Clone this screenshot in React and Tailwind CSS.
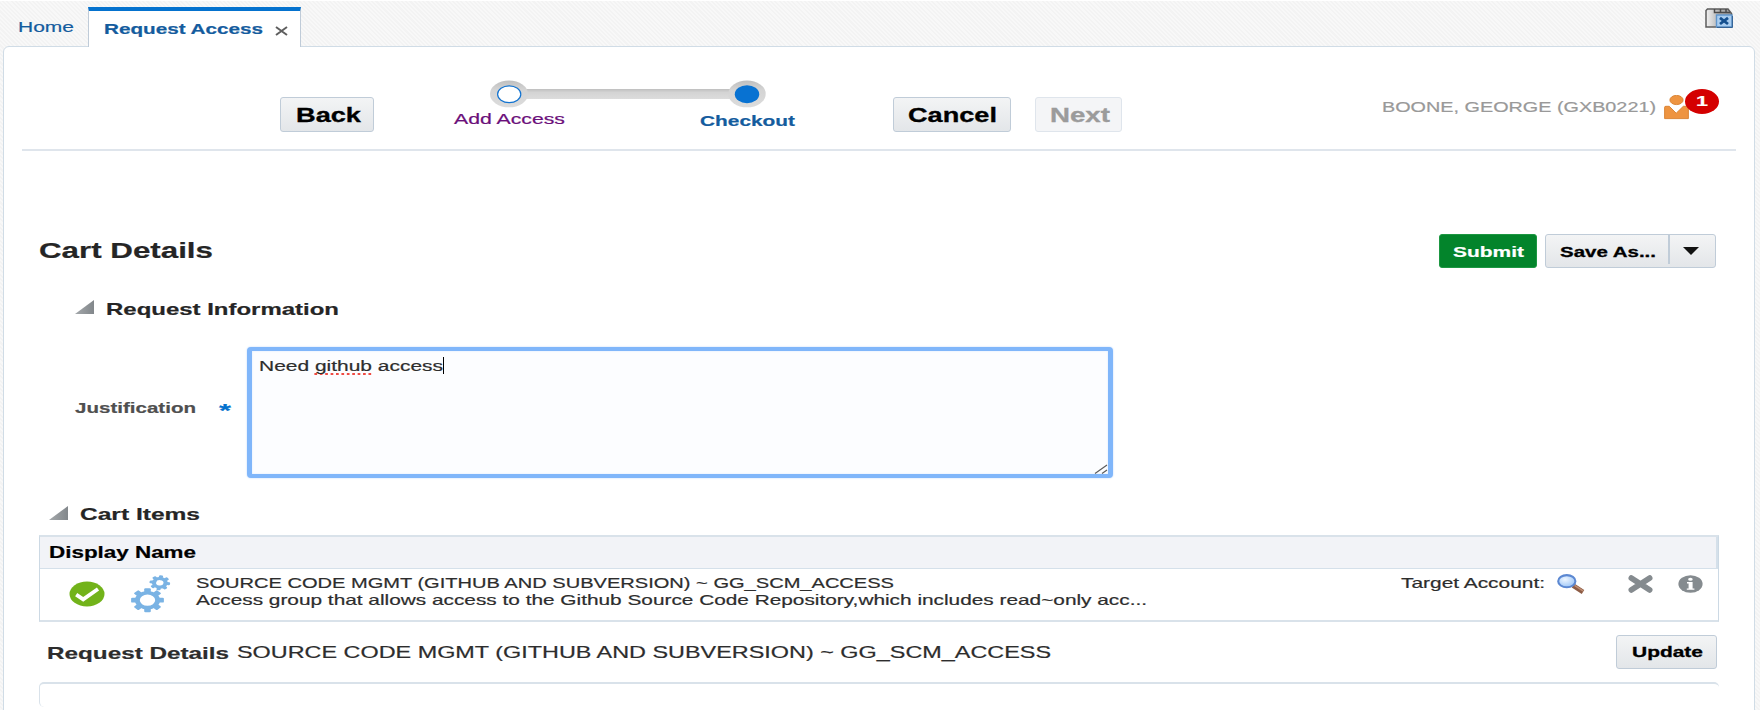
import React, { useLayoutEffect, useRef } from "react";

// Text set wide: the glyphs are stretched to fill the width of the box.
function Wide({ className = "", children }) {
  const box = useRef(null);
  const text = useRef(null);
  useLayoutEffect(() => {
    const el = text.current;
    el.style.transform = "none";
    const natural = el.getBoundingClientRect().width;
    const target = box.current.getBoundingClientRect().width;
    el.style.transform = `scaleX(${target / natural})`;
  });
  return (
    <span ref={box} className={`block shrink-0 whitespace-nowrap ${className}`}>
      <span ref={text} className="inline-block origin-left align-top">
        {children}
      </span>
    </span>
  );
}

function Triangle({ className }) {
  return (
    <svg className={`block shrink-0 ${className}`} viewBox="0 0 19 14" preserveAspectRatio="none">
      <defs>
        <linearGradient id="tri" x1="0" x2="1">
          <stop offset="0" stopColor="#a4a8ab" />
          <stop offset="1" stopColor="#82878b" />
        </linearGradient>
      </defs>
      <path d="M19 0V14H0z" fill="url(#tri)" />
    </svg>
  );
}

const button =
  "flex shrink-0 rounded-[3px] border border-[#c0ccd8] bg-linear-to-b from-[#f3f4f5] to-[#e3e6e9] text-black font-bold [-webkit-text-stroke:0.3px_black]";

function TabsIcon() {
  return (
    <svg className="mt-[7px] ml-auto mr-[27px] h-5 w-7" viewBox="0 0 28 20">
      <defs>
        <linearGradient id="folder" x1="0" x2="1">
          <stop offset="0" stopColor="#f2f2f2" />
          <stop offset="0.5" stopColor="#b4b4b4" />
          <stop offset="1" stopColor="#9a9a9a" />
        </linearGradient>
      </defs>
      <path d="M2.5 1H23l3.5 4.5V19H1V2.5z" fill="url(#folder)" stroke="#5c5c5c" strokeWidth="1.5" />
      <path d="M9.5 1v3.5H25M15.5 1v3M21 1v3" fill="none" stroke="#4a4a4a" strokeWidth="1.5" />
      <rect x="11.5" y="7" width="15.5" height="12" fill="#a9cdf0" stroke="#5e94cb" strokeWidth="1.4" />
      <path d="M12 19.4H27.4V8" fill="none" stroke="#2f5f92" strokeWidth="1" />
      <path d="M15 9.8l8 6.2M23 9.8l-8 6.2" stroke="#15508f" strokeWidth="2.8" />
    </svg>
  );
}

function Stepper() {
  return (
    <svg className="block h-[28px] w-[276px]" viewBox="0 0 276 28">
      <defs>
        <linearGradient id="track" x1="0" y1="0" x2="0" y2="1">
          <stop offset="0" stopColor="#bfbfbf" />
          <stop offset="0.35" stopColor="#d4d4d4" />
          <stop offset="1" stopColor="#dcdcdc" />
        </linearGradient>
      </defs>
      <rect x="34" y="9" width="208" height="10" fill="url(#track)" />
      <ellipse cx="19" cy="13.9" rx="19" ry="13.4" fill="url(#track)" />
      <ellipse cx="257" cy="13.9" rx="18.7" ry="13.4" fill="url(#track)" />
      <ellipse cx="19.2" cy="14.2" rx="11.6" ry="8.4" fill="#fff" stroke="#1273d0" strokeWidth="1.2" />
      <ellipse cx="257" cy="14.2" rx="12.2" ry="9" fill="#0872d2" />
    </svg>
  );
}

function PersonIcon() {
  return (
    <svg className="block h-[25px] w-[25px]" viewBox="0 0 25 25">
      <ellipse cx="12.5" cy="5" rx="6.6" ry="4.6" fill="#ee9440" stroke="#d87f2c" strokeWidth="0.9" />
      <path
        d="M.6 12.2Q.6 11.3 2 11.3H5.3L12.2 18.2 19.3 11.3H22.8Q24.4 11.3 24.4 12.4V23.6H.6z"
        fill="#ee9440"
        stroke="#d87f2c"
        strokeWidth="0.9"
      />
    </svg>
  );
}

function CheckIcon() {
  return (
    <svg className="block h-[26px] w-[36px] shrink-0" viewBox="0 0 36 26">
      <ellipse cx="18" cy="13" rx="17.5" ry="12.5" fill="#72b31a" />
      <path d="M7.2 13.6L14.2 18.4 29 8" fill="none" stroke="#fff" strokeWidth="3.8" />
    </svg>
  );
}

const teeth = [0, 45, 90, 135, 180, 225, 270, 315];

function Gear({ x, y, r, hole, tooth, turn }) {
  return (
    <g transform={`translate(${x} ${y}) scale(1.37 1) rotate(${turn})`} fill="#7ab3e4">
      <circle r={(r + hole) / 2} fill="none" stroke="#7ab3e4" strokeWidth={r - hole} />
      {teeth.map((a) => (
        <rect key={a} x={-tooth / 2} y={-r * 1.3} width={tooth} height={r * 0.5} rx="0.9" transform={`rotate(${a})`} />
      ))}
    </g>
  );
}

function GearsIcon() {
  return (
    <svg className="block h-[38px] w-[41px] shrink-0" viewBox="0 0 41 38">
      <Gear x={17.5} y={25.2} r={9.2} hole={5.6} tooth={4.8} turn={0} />
      <Gear x={29.8} y={7.8} r={5.8} hole={2.7} tooth={3} turn={8} />
    </svg>
  );
}

function SearchIcon() {
  return (
    <svg className="block h-5 w-7 shrink-0" viewBox="0 0 28 20">
      <defs>
        <radialGradient id="lens" cx="0.4" cy="0.35" r="0.7">
          <stop offset="0" stopColor="#eef6ff" />
          <stop offset="1" stopColor="#98c3f7" />
        </radialGradient>
      </defs>
      <path d="M16 11.5L26 18" stroke="#8d5c45" strokeWidth="4.6" />
      <path d="M17.5 11.4L26 16.9" stroke="#c08f74" strokeWidth="1.4" />
      <ellipse cx="9.8" cy="7.2" rx="8.6" ry="6.1" fill="url(#lens)" stroke="#5c88d2" strokeWidth="2.1" />
    </svg>
  );
}

function RemoveIcon() {
  return (
    <svg className="block h-[18px] w-[25px] shrink-0" viewBox="0 0 25 18">
      <path d="M3.4 3.1L21.6 14.9M21.6 3.1L3.4 14.9" stroke="#858b8f" strokeWidth="5.8" strokeLinecap="round" />
    </svg>
  );
}

function InfoIcon() {
  return (
    <svg className="block h-[18px] w-[25px] shrink-0" viewBox="0 0 25 18">
      <ellipse cx="12.5" cy="9" rx="12.1" ry="8.7" fill="#858b8f" />
      <ellipse cx="12.4" cy="4.3" rx="2.3" ry="1.5" fill="#fff" />
      <path d="M9 7H14.6V13.4H16.4V14.8H8.8V13.4H10.6V8.4H9z" fill="#fff" />
    </svg>
  );
}

export default function App() {
  return (
    <div className="h-[710px] w-[1760px] overflow-hidden border-t border-white bg-[#f6f6f6] bg-[repeating-linear-gradient(45deg,#f8f8f8_0px,#f8f8f8_1.5px,#f3f3f3_1.5px,#f3f3f3_3px)] font-['Liberation_Sans',Arial,sans-serif] text-[#2d2d2d] [-webkit-text-stroke:0.2px_currentColor]">
      <header className="flex h-[45px]">
        <Wide className="mt-[12px] ml-[18px] h-7 w-[56px] text-[15px] leading-7 text-[#145c9e]">Home</Wide>
        <div className="relative mt-[6px] ml-[14px] flex h-[40px] w-[213px] border-x border-t-4 border-x-[#bfcbd8] border-t-[#0572ce] bg-white">
          <Wide className="mt-[4px] ml-[15px] h-7 w-[159px] text-[15px] leading-7 font-bold text-[#145c9e]">
            Request Access
          </Wide>
          <svg className="mt-[15px] ml-[12px] h-[10px] w-[13px]" viewBox="0 0 13 10">
            <path d="M1 1l11 8M12 1L1 9" stroke="#5e5e5e" strokeWidth="2" />
          </svg>
        </div>
        <TabsIcon />
      </header>

      <main className="ml-[3px] h-[670px] w-[1752px] rounded-t-md border border-[#d0dce6] bg-white">
        <div className="mr-[18px] ml-[18px] flex h-[104px] border-b-2 border-[#dfe5ec]">
          <div className={`${button} mt-[50px] ml-[258px] h-[35px] w-[94px]`}>
            <Wide className="mt-px ml-[15px] h-8 w-[65px] text-[19.5px] leading-8">Back</Wide>
          </div>
          <div className="mt-[33px] ml-[79px] w-[360px]">
            <div className="ml-[37px]">
              <Stepper />
            </div>
            <div className="flex">
              <Wide className="mt-[1px] ml-[1px] h-5 w-[111px] text-[15.5px] leading-5 text-[#6b0f7a]">Add Access</Wide>
              <Wide className="mt-[3px] ml-[135px] h-5 w-[95px] text-[15px] leading-5 font-bold text-[#145c9e]">
                Checkout
              </Wide>
            </div>
          </div>
          <div className={`${button} mt-[50px] ml-[80px] h-[35px] w-[118px]`}>
            <Wide className="mt-px ml-[14px] h-8 w-[89px] text-[19.5px] leading-8">Cancel</Wide>
          </div>
          <div className="mt-[50px] ml-[24px] flex h-[35px] w-[87px] shrink-0 rounded-[3px] border border-[#dfe5ec] bg-[#f4f5f7] font-bold text-[#9b9b9b] [-webkit-text-stroke:0.3px_#9b9b9b]">
            <Wide className="mt-px ml-[14px] h-8 w-[60px] text-[19.5px] leading-8">Next</Wide>
          </div>
          <Wide className="mt-[50px] ml-[260px] h-5 w-[274px] text-[15.5px] leading-5 text-[#999999]">
            BOONE, GEORGE (GXB0221)
          </Wide>
          <div className="relative mt-[48px] ml-[8px] h-[25px] w-[25px]">
            <PersonIcon />
            <span className="absolute -top-[6px] left-[21px] flex h-[25px] w-[34px] justify-center rounded-[50%] bg-[#d40000] font-bold text-white">
              <Wide className="h-6 w-[12px] text-[14.5px] leading-6">1</Wide>
            </span>
          </div>
        </div>

        <div className="mt-[82px] ml-[35px] flex h-[48px]">
          <h1 className="mt-[4px] w-[177px] text-[22px] leading-7 font-bold text-[#252525]">
            <Wide className="h-7 w-[174px]">Cart Details</Wide>
          </h1>
          <div className="mt-[1px] ml-auto flex h-[34px] w-[98px] rounded-[3px] border border-[#1d9742] bg-[#03842b] font-bold text-white">
            <Wide className="ml-[13px] h-8 w-[71px] text-[15px] leading-[34px]">Submit</Wide>
          </div>
          <div className={`${button} mt-[1px] mr-[38px] ml-[8px] h-[34px] w-[171px]`}>
            <Wide className="ml-[14px] h-8 w-[96px] text-[15px] leading-[34px]">Save As...</Wide>
            <div className="ml-[12px] h-[29px] w-[2px] bg-[#c0ccd8]" />
            <svg className="mt-[12px] ml-[13px] h-[8px] w-[16px]" viewBox="0 0 16 8">
              <path d="M0 0H16L8 8z" fill="#111" />
            </svg>
          </div>
        </div>

        <div className="mt-[17px] ml-[71px] flex h-6">
          <Triangle className="mt-[2px] h-[14px] w-[19px]" />
          <Wide className="ml-[12px] h-6 w-[233px] text-[17px] leading-6 font-bold text-[#252525]">
            Request Information
          </Wide>
        </div>

        <div className="mt-[25px] ml-[71px] flex h-[133px]">
          <Wide className="mt-[47px] h-6 w-[121px] text-[15px] leading-7 font-bold text-[#4f4f4f]">Justification</Wide>
          <Wide className="mt-[50px] ml-[23px] h-6 w-[12px] text-[18px] leading-7 font-bold text-[#0572ce]">*</Wide>
          <div className="relative ml-[16px] flex h-[131px] w-[866px] rounded-[4px] border-x-[5px] border-y-4 border-[#80b6fa] bg-[#fcfdff] shadow-[0_0_2px_0px_#b9d6fc,inset_0_0_2px_0px_#d4e6fd]">
            <Wide className="mt-[3px] ml-[7px] h-6 w-[184px] text-[15.5px] leading-6">
              Need{" "}
              <span className="underline decoration-[#ef4b43] decoration-dotted decoration-2 underline-offset-[2px] [text-decoration-skip-ink:none]">
                github
              </span>{" "}
              access
            </Wide>
            <span className="mt-[6px] h-[17px] w-px bg-black" />
            <svg className="absolute right-0 bottom-0 h-[10px] w-[14px]" viewBox="0 0 14 10">
              <path d="M1 9.5L13 1M8 9.5l5-3.6" stroke="#5c5c5c" strokeWidth="1.2" />
            </svg>
          </div>
        </div>

        <div className="mt-[23px] ml-[45px] flex h-6">
          <Triangle className="mt-[3px] h-[14px] w-[19px]" />
          <Wide className="ml-[12px] h-6 w-[120px] text-[17px] leading-6 font-bold text-[#252525]">Cart Items</Wide>
        </div>

        <section className="mt-[8px] ml-[35px] h-[87px] w-[1680px] border-y-2 border-x border-y-[#d9e2ea] border-x-[#ccd9e4]">
          <div className="flex h-[32px] border-r-2 border-b border-[#d5e0ea] bg-[#f2f3f7]">
            <Wide className="ml-[9px] h-8 w-[147px] text-[16px] leading-8 font-bold text-black">Display Name</Wide>
          </div>
          <div className="flex">
            <div className="mt-[12px] ml-[29px]">
              <CheckIcon />
            </div>
            <div className="mt-[6px] ml-[25px]">
              <GearsIcon />
            </div>
            <div className="mt-[5px] ml-[25px]">
              <Wide className="h-[17px] w-[698px] text-[15px] leading-[17px]">
                SOURCE CODE MGMT (GITHUB AND SUBVERSION) ~ GG_SCM_ACCESS
              </Wide>
              <Wide className="h-[17px] w-[951px] text-[15px] leading-[17px]">
                Access group that allows access to the Github Source Code Repository,which includes read~only acc...
              </Wide>
            </div>
            <Wide className="mt-[5px] ml-[254px] h-[17px] w-[144px] text-[15px] leading-[17px]">Target Account:</Wide>
            <div className="mt-[5px] ml-[12px]">
              <SearchIcon />
            </div>
            <div className="mt-[6px] ml-[43px]">
              <RemoveIcon />
            </div>
            <div className="mt-[6px] ml-[25px]">
              <InfoIcon />
            </div>
          </div>
        </section>

        <div className="mt-[12px] ml-[43px] flex h-[36px]">
          <Wide className="mt-[8px] h-6 w-[182px] text-[17px] leading-6 font-bold text-[#2d2d2d]">Request Details</Wide>
          <Wide className="mt-[7px] ml-[8px] h-6 w-[814px] text-[17px] leading-6">
            SOURCE CODE MGMT (GITHUB AND SUBVERSION) ~ GG_SCM_ACCESS
          </Wide>
          <div className={`${button} mt-[1px] mr-[37px] ml-auto h-[34px] w-[101px]`}>
            <Wide className="ml-[15px] h-8 w-[71px] text-[15px] leading-8">Update</Wide>
          </div>
        </div>

        <div className="mt-[12px] ml-[35px] h-[25px] w-[1680px] rounded-l-[5px] rounded-tr-[5px] border-t-2 border-l border-[#d9e2ea]" />
      </main>
    </div>
  );
}
